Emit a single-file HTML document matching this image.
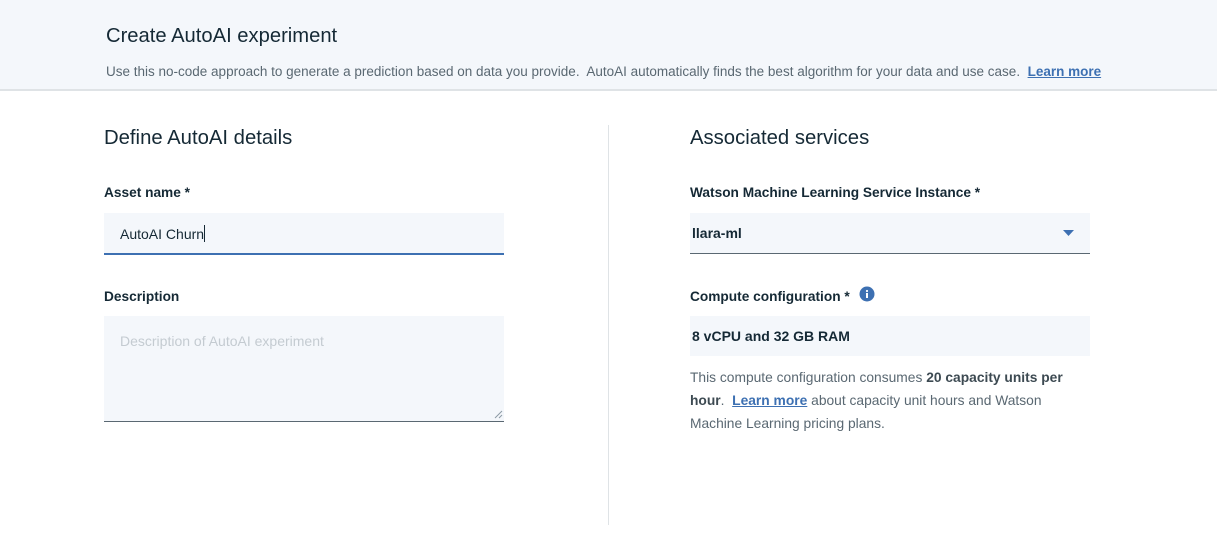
<!DOCTYPE html>
<html><head><style>
*{box-sizing:border-box;margin:0;padding:0}
body{width:1217px;height:542px;background:#fff;font-family:"Liberation Sans",sans-serif;color:#152935;position:relative;overflow:hidden}
.hdr{position:absolute;left:0;top:0;width:1217px;height:91px;background:#f4f7fb;border-bottom:2px solid #dfe3e6}
.abs{position:absolute;white-space:nowrap}
.h1{font-size:20.2px;color:#152935}
.sub{font-size:13.5px;color:#5a6872}
a{color:#3d70b2;font-weight:bold;text-decoration:underline}
.h2{font-size:20.3px;color:#152935}
.lbl{font-size:13.7px;font-weight:bold;color:#152935}
.fld{position:absolute;background:#f4f7fb}
</style></head><body>
<div class="hdr"></div>
<div class="abs h1" style="left:106px;top:25px">Create AutoAI experiment</div>
<div class="abs sub" style="left:106px;top:64px">Use this no-code approach to generate a prediction based on data you provide.&nbsp; AutoAI automatically finds the best algorithm for your data and use case.&nbsp; <a>Learn more</a></div>

<div class="abs h2" style="left:104px;top:127px">Define AutoAI details</div>
<div class="abs lbl" style="left:104px;top:185px">Asset name *</div>
<div class="fld" style="left:104px;top:213px;width:400px;height:42px;border-bottom:2px solid #3d70b2"></div>
<div class="abs" style="left:120px;top:225px;font-size:14px;color:#152935">AutoAI Churn<span style="display:inline-block;width:1px;height:17px;background:#152935;vertical-align:-3px"></span></div>
<div class="abs lbl" style="left:104px;top:289px">Description</div>
<div class="fld" style="left:104px;top:316px;width:400px;height:106px;border-bottom:1px solid #5a6872"></div>
<div class="abs" style="left:120px;top:333px;font-size:14px;color:#c4cbd1">Description of AutoAI experiment</div>
<svg class="abs" style="left:494px;top:410px" width="9" height="9"><path d="M1 8L8 1M5 8L8 5" stroke="#8c9ba5" stroke-width="1"/></svg>

<div class="abs" style="left:608px;top:125px;width:1px;height:400px;background:#dfe3e6"></div>

<div class="abs h2" style="left:690px;top:127px">Associated services</div>
<div class="abs lbl" style="left:690px;top:185px">Watson Machine Learning Service Instance *</div>
<div class="fld" style="left:690px;top:213px;width:400px;height:41px;border-bottom:1px solid #5a6872"></div>
<div class="abs" style="left:692px;top:225px;font-size:14px;font-weight:bold">llara-ml</div>
<svg class="abs" style="left:1063px;top:230px" width="11" height="6"><path d="M0 0H11L5.5 6Z" fill="#3d70b2"/></svg>
<div class="abs lbl" style="left:690px;top:289px">Compute configuration *</div>
<svg class="abs" style="left:859px;top:286px" width="16" height="16"><circle cx="8" cy="8" r="7.5" fill="#3d70b2"/><rect x="7" y="7" width="2" height="5" fill="#fff"/><circle cx="8" cy="5" r="1.1" fill="#fff"/></svg>
<div class="fld" style="left:690px;top:316px;width:400px;height:40px"></div>
<div class="abs" style="left:692px;top:328px;font-size:14px;font-weight:bold">8 vCPU and 32 GB RAM</div>
<div class="abs" style="left:690px;top:366px;font-size:13.8px;line-height:23px;color:#5a6872;white-space:normal;width:392px">This compute configuration consumes <b style="color:#3d4a52">20 capacity units per hour</b>.&nbsp; <a>Learn more</a> about capacity unit hours and Watson Machine Learning pricing plans.</div>
</body></html>
